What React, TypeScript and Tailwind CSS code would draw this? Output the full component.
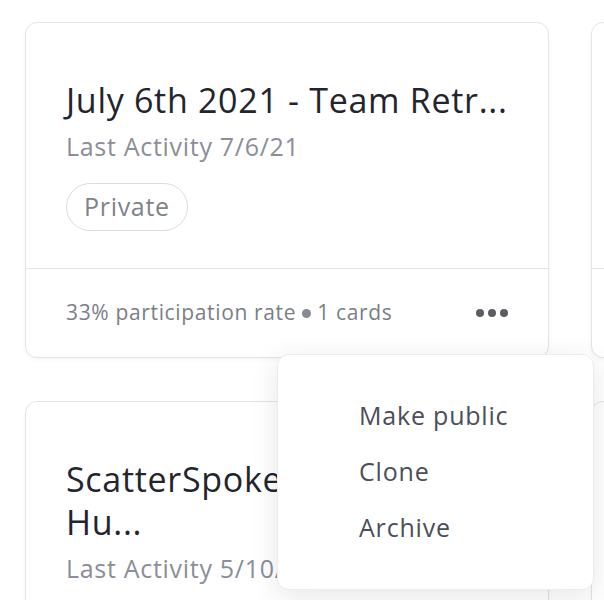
import React from "react";

type Board = {
  title: React.ReactNode;
  activity: string;
  rate: number;
  cards: number;
};

const boards: Board[] = [
  { title: "July 6th 2021 - Team Retr...", activity: "7/6/21", rate: 33, cards: 1 },
  { title: "June 22nd 2021 - Sprint R...", activity: "6/22/21", rate: 50, cards: 4 },
  {
    title: (
      <>
        ScatterSpoke Retro
        <br />
        Hu...
      </>
    ),
    activity: "5/10/21",
    rate: 40,
    cards: 6,
  },
  { title: "May 4th 2021 - Planning...", activity: "5/4/21", rate: 25, cards: 2 },
];

function Dots() {
  return (
    <button className="flex items-center gap-[4px]" aria-label="More options">
      <span className="h-[8px] w-[8px] rounded-full bg-[#5c5d62]" />
      <span className="h-[8px] w-[8px] rounded-full bg-[#5c5d62]" />
      <span className="h-[8px] w-[8px] rounded-full bg-[#5c5d62]" />
    </button>
  );
}

function Menu() {
  return (
    <div className="absolute left-[251px] top-[331px] z-10 w-[317px] rounded-[12px] border border-[#ececec] bg-white py-[33px] pl-[81px] shadow-[0_6px_28px_rgba(0,0,0,0.10)]">
      {["Make public", "Clone", "Archive"].map((item) => (
        <div key={item} className="flex h-14 items-center text-[25px] tracking-[0.8px] text-[#4b4e59]">
          {item}
        </div>
      ))}
    </div>
  );
}

function BoardCard({ board, open }: { board: Board; open?: boolean }) {
  return (
    <div className="relative rounded-[12px] border-[1.5px] border-[#e4e4e4] bg-white shadow-[0_2px_4px_rgba(0,0,0,0.04)]">
      <div className="px-10 pt-[56px] pb-[37px]">
        <h2 className="whitespace-nowrap text-[34px] leading-[43px] tracking-[0.7px] text-[#22252d]">{board.title}</h2>
        <p className="mt-[3px] text-[25px] leading-[43px] tracking-[0.7px] text-[#8a8e98]">Last Activity {board.activity}</p>
        <span className="mt-[15px] inline-flex h-[48px] items-center rounded-full border-[1.5px] border-[#dcdcdc] px-[17px] text-[25px] tracking-[0.7px] text-[#7f838c]">
          Private
        </span>
      </div>
      <div className="flex h-[89px] items-center justify-between border-t-[1.5px] border-[#e4e4e4] px-10">
        <p className="flex items-center text-[21px] tracking-[0.65px] text-[#7b7e86]">
          {board.rate}% participation rate
          <span className="mx-[6px] h-[9px] w-[9px] rounded-full bg-[#858a94]" />
          {board.cards} cards
        </p>
        <Dots />
      </div>
      {open && <Menu />}
    </div>
  );
}

export default function App() {
  return (
    <div
      className="h-[600px] w-[604px] overflow-hidden bg-white"
      style={{ fontFamily: "'Open Sans', 'Noto Sans', sans-serif" }}
    >
      <div className="grid w-max grid-cols-[524px_524px] gap-x-[42px] gap-y-[43px] pl-[25px] pt-[22px]">
        {boards.map((b, i) => (
          <BoardCard key={i} board={b} open={i === 0} />
        ))}
      </div>
    </div>
  );
}
